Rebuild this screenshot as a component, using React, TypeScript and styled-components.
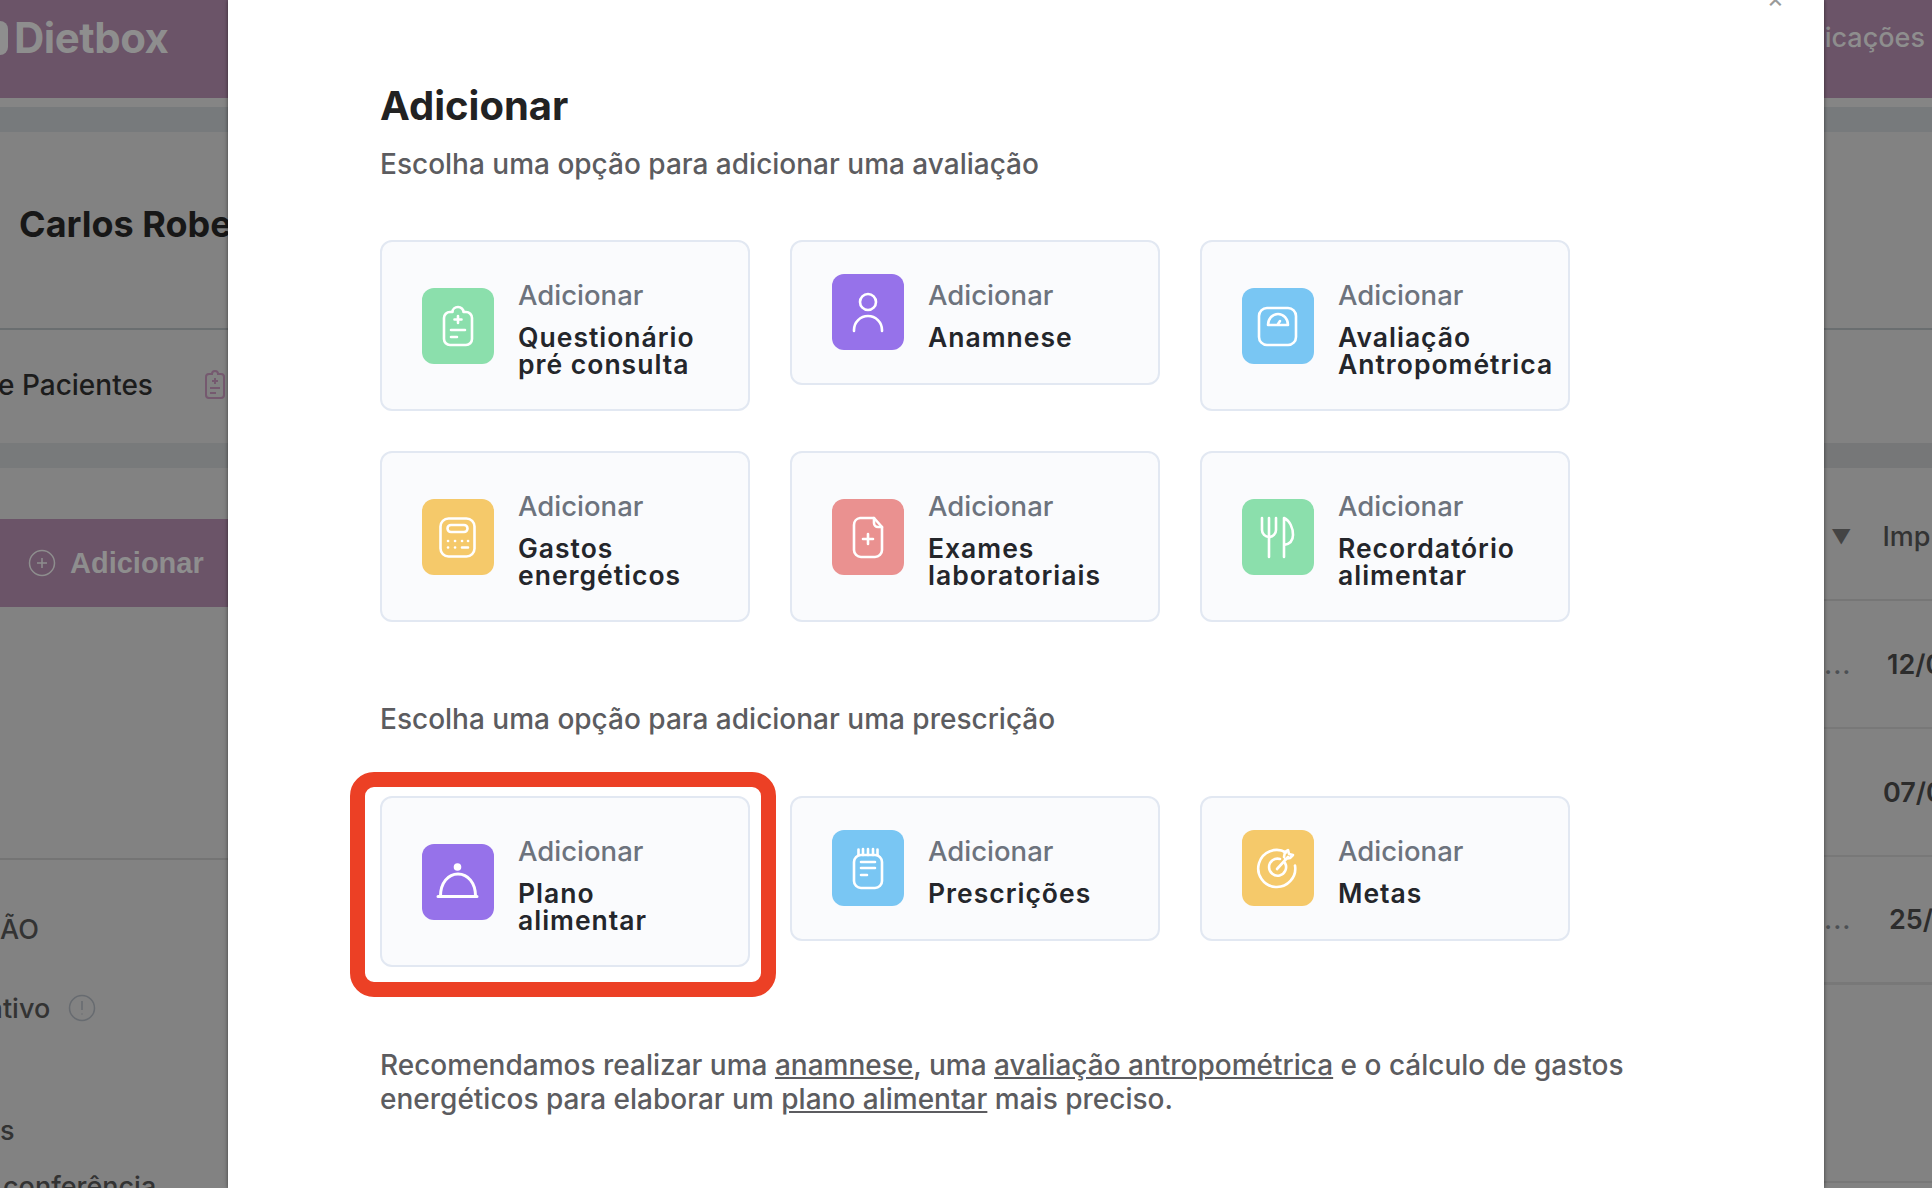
import styled, { createGlobalStyle } from "styled-components";

const GlobalStyle = createGlobalStyle`
  html, body {
    margin: 0;
    height: 100%;
    overflow: hidden;
    font-family: Inter, "Liberation Sans", sans-serif;
  }
`;

const Page = styled.div`
  position: relative;
  width: 1932px;
  height: 1188px;
  overflow: hidden;
  background: #828282;
  color: #2c2c2c;
`;

const Header = styled.header`
  display: flex;
  align-items: center;
  justify-content: space-between;
  height: 98px;
  padding-bottom: 24px;
  box-sizing: border-box;
  background: #6b5468;
`;

const Logo = styled.div`
  display: flex;
  align-items: center;
  gap: 4px;
  margin-left: -24px;
  font-size: 42px;
  font-weight: 700;
  letter-spacing: -0.5px;
  color: #8e8e8e;
`;

const HeaderLink = styled.span`
  font-size: 27px;
  font-weight: 500;
  color: #8e8e8e;
  margin-right: 7px;
`;

const TopStrip = styled.div`
  height: 34px;
  box-sizing: border-box;
  border-top: 9px solid #858585;
  background: #777a7c;
`;

const Columns = styled.div`
  display: flex;
  justify-content: space-between;
`;

const LeftColumn = styled.div`
  width: 228px;
  overflow: hidden;
  white-space: nowrap;
`;

const RightColumn = styled.div`
  width: 108px;
  overflow: hidden;
  white-space: nowrap;
`;

const PatientName = styled.div`
  height: 198px;
  box-sizing: border-box;
  padding: 72px 0 0 19px;
  border-bottom: 2px solid #6a6e70;
  font-size: 36px;
  font-weight: 700;
  line-height: 40px;
  color: #171717;
`;

const TabsRow = styled.div`
  display: flex;
  align-items: center;
  justify-content: space-between;
  height: 113px;
  box-sizing: border-box;
  padding: 0 2px 3px 0;
  font-size: 28px;
  font-weight: 500;
  color: #1c1c1c;
  overflow: hidden;
`;

const TabLabel = styled.span`
  margin-left: -2px;
`;

const Band = styled.div`
  height: 25px;
  background: #787a7b;
`;

const AddBar = styled.div`
  display: flex;
  align-items: center;
  gap: 14px;
  height: 88px;
  margin-top: 51px;
  padding-left: 28px;
  background: #6b5468;
  font-family: "Liberation Sans", sans-serif;
  font-size: 29px;
  font-weight: 700;
  color: #8e8e8e;
`;

const SideSection = styled.div`
  margin-top: 251px;
  padding-top: 47px;
  border-top: 2px solid #747474;
  font-size: 27px;
  font-weight: 500;
  color: #333;
`;

const SideRow = styled.div`
  display: flex;
  align-items: center;
  gap: 18px;
  height: 44px;
  margin-bottom: 35px;
`;

const Clipped = styled.span`
  flex: none;
  margin-left: -36px;
`;

const ClippedLine = styled.div<{ $top: number; $left: number }>`
  margin: ${(p) => p.$top}px 0 0 ${(p) => p.$left}px;
  line-height: 34px;
`;

const RightTop = styled.div`
  height: 198px;
  box-sizing: border-box;
  border-bottom: 2px solid #6a6e70;
`;

const RightGap = styled.div`
  height: 113px;
`;

const RightBand = styled.div`
  height: 25px;
  background: #767778;
`;

const TableHead = styled.div`
  display: flex;
  align-items: center;
  gap: 31px;
  height: 133px;
  box-sizing: border-box;
  padding: 6px 0 0 7px;
  border-bottom: 2px solid #767676;
  font-size: 27px;
  font-weight: 500;
  color: #333;
`;

const Caret = styled.span`
  font-size: 20px;
  color: #444;
`;

const TableRow = styled.div<{ $thick?: boolean }>`
  display: flex;
  align-items: center;
  height: 128px;
  box-sizing: border-box;
  border-bottom: ${(p) => (p.$thick ? "3px" : "2px")} solid #787878;
  font-size: 27px;
  font-weight: 600;
  color: #2c2c2c;
`;

const Dots = styled.span<{ $width: number; $gap: number }>`
  flex: none;
  width: ${(p) => p.$width}px;
  box-sizing: border-box;
  padding-right: ${(p) => p.$gap}px;
  text-align: right;
  font-weight: 500;
  color: #4c5054;
  letter-spacing: 1px;
`;

const BottomLine = styled.div`
  height: 198px;
  box-sizing: border-box;
  border-bottom: 2px solid #787878;
`;

const Modal = styled.section`
  position: absolute;
  top: 0;
  bottom: 0;
  left: 228px;
  width: 1596px;
  box-sizing: border-box;
  padding: 84px 0 0 152px;
  background: #fff;
  box-shadow: 0 0 4px rgba(0, 0, 0, 0.55);
`;

const CloseMark = styled.span`
  position: absolute;
  top: -18px;
  right: 40px;
  font-size: 26px;
  color: #9a9a9a;
`;

const Title = styled.h2`
  margin: 0 0 19px;
  font-size: 40px;
  font-weight: 700;
  line-height: 44px;
  color: #222;
`;

const Subtitle = styled.p`
  margin: 0;
  font-size: 28px;
  font-weight: 500;
  line-height: 34px;
  color: #5c5c60;
`;

const CardGrid = styled.div<{ $top: number; $bottom: number }>`
  display: grid;
  grid-template-columns: repeat(3, 370px);
  gap: 40px;
  align-items: start;
  margin: ${(p) => p.$top}px 0 ${(p) => p.$bottom}px;
`;

const Card = styled.div<{ $tall?: boolean }>`
  display: flex;
  gap: 24px;
  height: ${(p) => (p.$tall ? 171 : 145)}px;
  box-sizing: border-box;
  padding: ${(p) => (p.$tall ? 46 : 32)}px 0 0 40px;
  border: 2px solid #e2e8f2;
  border-radius: 12px;
  background: #fafbfd;
`;

const IconTile = styled.div<{ $color: string }>`
  flex: none;
  width: 72px;
  height: 76px;
  border-radius: 12px;
  background: ${(p) => p.$color};
`;

const CardText = styled.div<{ $tall?: boolean }>`
  margin-top: ${(p) => (p.$tall ? -10 : 4)}px;
`;

const CardLabel = styled.div`
  font-size: 27.5px;
  font-weight: 500;
  line-height: 34px;
  color: #6d737d;
`;

const CardName = styled.div`
  margin-top: 12px;
  font-size: 26.5px;
  font-weight: 600;
  line-height: 27px;
  letter-spacing: 1px;
  color: #24262b;
  white-space: pre-line;
`;

const Highlight = styled.div`
  position: absolute;
  top: 772px;
  left: 122px;
  width: 426px;
  height: 225px;
  box-sizing: border-box;
  border: 15px solid #ec4025;
  border-radius: 24px;
`;

const Note = styled(Subtitle)`
  width: 1300px;
`;

const NoteLink = styled.span`
  text-decoration: underline;
`;

const Glyph = styled.svg`
  display: block;
  fill: none;
  stroke: #fff;
  stroke-width: 2.6;
  stroke-linecap: round;
  stroke-linejoin: round;
`;

const TileIcon = ({ color, children }: { color: string; children: React.ReactNode }) => (
  <IconTile $color={color}>
    <Glyph width="72" height="76" viewBox="0 0 72 76">
      {children}
    </Glyph>
  </IconTile>
);

const GREEN = "#8bdfac";
const PURPLE = "#9672ea";
const BLUE = "#79c6f3";
const YELLOW = "#f5c96a";
const RED = "#ea9190";

const ClipboardIcon = () => (
  <TileIcon color={GREEN}>
    <path d="M22 30a6 6 0 0 1 6-6h2.5a5.5 5 0 0 1 11 0H44a6 6 0 0 1 6 6v21a6 6 0 0 1-6 6H28a6 6 0 0 1-6-6z" />
    <path d="M36 28v7M32.5 31.5h7M29 42h14M29 49h6" />
  </TileIcon>
);

const PersonIcon = () => (
  <TileIcon color={PURPLE}>
    <circle cx="36" cy="28" r="8" />
    <path d="M22 57v-1a14 14 0 0 1 28 0v1" />
  </TileIcon>
);

const ScaleIcon = () => (
  <TileIcon color={BLUE}>
    <rect x="17" y="20" width="37" height="37" rx="8" />
    <path d="M26 37a10 11 0 0 1 20 0z" />
    <path d="M36 36l2-3" />
  </TileIcon>
);

const CalculatorIcon = () => (
  <TileIcon color={YELLOW}>
    <rect x="18.5" y="19.5" width="34" height="38" rx="8" />
    <rect x="25.5" y="26" width="20" height="7" rx="3.5" />
    <path d="M26 42h.1M33 42h.1M40 42h.1M46 42h.1M26 48.500h.1M33 48.500h.1M40 48.500h6" />
  </TileIcon>
);

const DocumentIcon = () => (
  <TileIcon color={RED}>
    <path d="M28 19h14l8 9v23a7 7 0 0 1-7 7H29a7 7 0 0 1-7-7V26a7 7 0 0 1 6-7z" />
    <path d="M42 19v5a4 4 0 0 0 4 4h4M36 35v10M31 40h10" />
  </TileIcon>
);

const CutleryIcon = () => (
  <TileIcon color={GREEN}>
    <path d="M20 19v12a7 7 0 0 0 14 0V19M27 19v39" />
    <path d="M42 58V19c6 3 9 10 9 17 0 6-3 9-9 10" />
  </TileIcon>
);

const ClocheIcon = () => (
  <TileIcon color={PURPLE}>
    <circle cx="35.500" cy="23" r="2.500" fill="#fff" />
    <path d="M18.500 52c0-13 7.500-22 17.500-22s17.500 9 17.500 22M16 52.500h39" strokeWidth="3" />
  </TileIcon>
);

const NotepadIcon = () => (
  <TileIcon color={BLUE}>
    <rect x="22" y="25" width="28" height="33" rx="7" />
    <path d="M26.500 19.500v5.500M31 19v6M36 19v6M41 19v6M45.500 19.500v5.500M29 32h14M29 38h14M29 45h6" />
  </TileIcon>
);

const TargetIcon = () => (
  <TileIcon color={YELLOW}>
    <path d="M44 22.500a18.500 18.500 0 1 0 9 13" />
    <path d="M43 33a8.500 8.500 0 1 1-5-4" />
    <path d="M35 39l11-12M42 27l1-5 3-2 1 4 4 1-3 3-5 1" />
  </TileIcon>
);

const avaliacoes = [
  { name: "Questionário\npré consulta", icon: <ClipboardIcon />, tall: true },
  { name: "Anamnese", icon: <PersonIcon />, tall: false },
  { name: "Avaliação\nAntropométrica", icon: <ScaleIcon />, tall: true },
  { name: "Gastos\nenergéticos", icon: <CalculatorIcon />, tall: true },
  { name: "Exames\nlaboratoriais", icon: <DocumentIcon />, tall: true },
  { name: "Recordatório\nalimentar", icon: <CutleryIcon />, tall: true },
];

const prescricoes = [
  { name: "Plano\nalimentar", icon: <ClocheIcon />, tall: true },
  { name: "Prescrições", icon: <NotepadIcon />, tall: false },
  { name: "Metas", icon: <TargetIcon />, tall: false },
];

const renderCard = (item: { name: string; icon: React.ReactNode; tall: boolean }) => (
  <Card key={item.name} $tall={item.tall}>
    {item.icon}
    <CardText $tall={item.tall}>
      <CardLabel>Adicionar</CardLabel>
      <CardName>{item.name}</CardName>
    </CardText>
  </Card>
);

const App = () => (
  <Page>
    <GlobalStyle />
    <Header>
      <Logo>
        <svg width="34" height="44" viewBox="0 0 34 44">
          <rect x="2" y="6" width="30" height="34" rx="8" fill="#8e8e8e" />
        </svg>
        Dietbox
      </Logo>
      <HeaderLink>Publicações</HeaderLink>
    </Header>
    <TopStrip />
    <Columns>
      <LeftColumn>
        <PatientName>Carlos Roberto</PatientName>
        <TabsRow>
          <TabLabel>e Pacientes</TabLabel>
          <svg width="22" height="30" viewBox="0 0 22 30" fill="none" stroke="#75596f" strokeWidth="2">
            <path d="M2 7a3 3 0 0 1 3-3h3a3 3 0 0 1 6 0h3a3 3 0 0 1 3 3v18a3 3 0 0 1-3 3H5a3 3 0 0 1-3-3z" />
            <path d="M11 8v6M8 11h6M6 18h10M6 23h6" />
          </svg>
        </TabsRow>
        <Band />
        <AddBar>
          <svg width="28" height="28" viewBox="0 0 28 28" fill="none" stroke="#8e8e8e" strokeWidth="1.500">
            <circle cx="14" cy="14" r="12.500" />
            <path d="M14 9v10M9 14h10" />
          </svg>
          Adicionar
        </AddBar>
        <SideSection>
          <SideRow>ÃO</SideRow>
          <SideRow>
            <Clipped>Inativo</Clipped>
            <svg width="28" height="28" viewBox="0 0 28 28" fill="none" stroke="#676b70" strokeWidth="1.500">
              <circle cx="14" cy="14" r="12.500" />
              <path d="M14 7v9M14 19.500v1" />
            </svg>
          </SideRow>
          <ClippedLine $top={84} $left={0}>s</ClippedLine>
          <ClippedLine $top={22} $left={3}>conferência</ClippedLine>
        </SideSection>
      </LeftColumn>
      <RightColumn>
        <RightTop />
        <RightGap />
        <RightBand />
        <TableHead>
          <Caret>▼</Caret>
          Imp
        </TableHead>
        <TableRow>
          <Dots $width={63} $gap={36}>...</Dots>
          12/06
        </TableRow>
        <TableRow>
          <Dots $width={59} $gap={0}></Dots>
          07/06
        </TableRow>
        <TableRow $thick>
          <Dots $width={65} $gap={47}>...</Dots>
          25/06
        </TableRow>
        <BottomLine />
      </RightColumn>
    </Columns>
    <Modal>
      <CloseMark>×</CloseMark>
      <Title>Adicionar</Title>
      <Subtitle>Escolha uma opção para adicionar uma avaliação</Subtitle>
      <CardGrid $top={59} $bottom={80}>
        {avaliacoes.map(renderCard)}
      </CardGrid>
      <Subtitle>Escolha uma opção para adicionar uma prescrição</Subtitle>
      <CardGrid $top={60} $bottom={81}>
        {prescricoes.map(renderCard)}
      </CardGrid>
      <Highlight />
      <Note>
        Recomendamos realizar uma <NoteLink>anamnese</NoteLink>, uma{" "}
        <NoteLink>avaliação antropométrica</NoteLink> e o cálculo de gastos energéticos para
        elaborar um <NoteLink>plano alimentar</NoteLink> mais preciso.
      </Note>
    </Modal>
  </Page>
);

export default App;
